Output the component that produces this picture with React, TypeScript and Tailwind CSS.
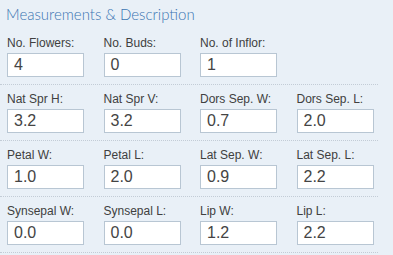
import React from "react";

const rows: [string, string][][] = [
  [
    ["No. Flowers:", "4"],
    ["No. Buds:", "0"],
    ["No. of Inflor:", "1"],
  ],
  [
    ["Nat Spr H:", "3.2"],
    ["Nat Spr V:", "3.2"],
    ["Dors Sep. W:", "0.7"],
    ["Dors Sep. L:", "2.0"],
  ],
  [
    ["Petal W:", "1.0"],
    ["Petal L:", "2.0"],
    ["Lat Sep. W:", "0.9"],
    ["Lat Sep. L:", "2.2"],
  ],
  [
    ["Synsepal W:", "0.0"],
    ["Synsepal L:", "0.0"],
    ["Lip W:", "1.2"],
    ["Lip L:", "2.2"],
  ],
];

export default function App() {
  return (
    <div className="w-[393px] h-[255px] overflow-hidden bg-[#e9f0f7] font-['Liberation_Sans',Arial,sans-serif]">
      <div className="h-[29px] pl-[6px] pt-[4px] text-[15px] leading-[20px] text-[#3a74b2] font-['Lato','Noto_Sans',sans-serif] font-light">
        Measurements &amp; Description
      </div>
      {rows.map((row, i) => (
        <div
          key={i}
          className="w-[378px] pl-[7px] pt-[6px] pb-[7px] border-b border-dotted border-[#c3ccd6] grid grid-cols-[repeat(4,77px)] gap-x-[19.5px]"
        >
          {row.map(([label, value]) => (
            <div key={label} className="flex flex-col gap-[2px]">
              <div className="text-[12px] leading-[16px] text-[#404040] whitespace-nowrap">{label}</div>
              <div className="h-[24px] bg-white border border-[#b8c6d3] pl-[6px] flex items-center text-[16px] text-[#444]">
                {value}
              </div>
            </div>
          ))}
        </div>
      ))}
    </div>
  );
}
